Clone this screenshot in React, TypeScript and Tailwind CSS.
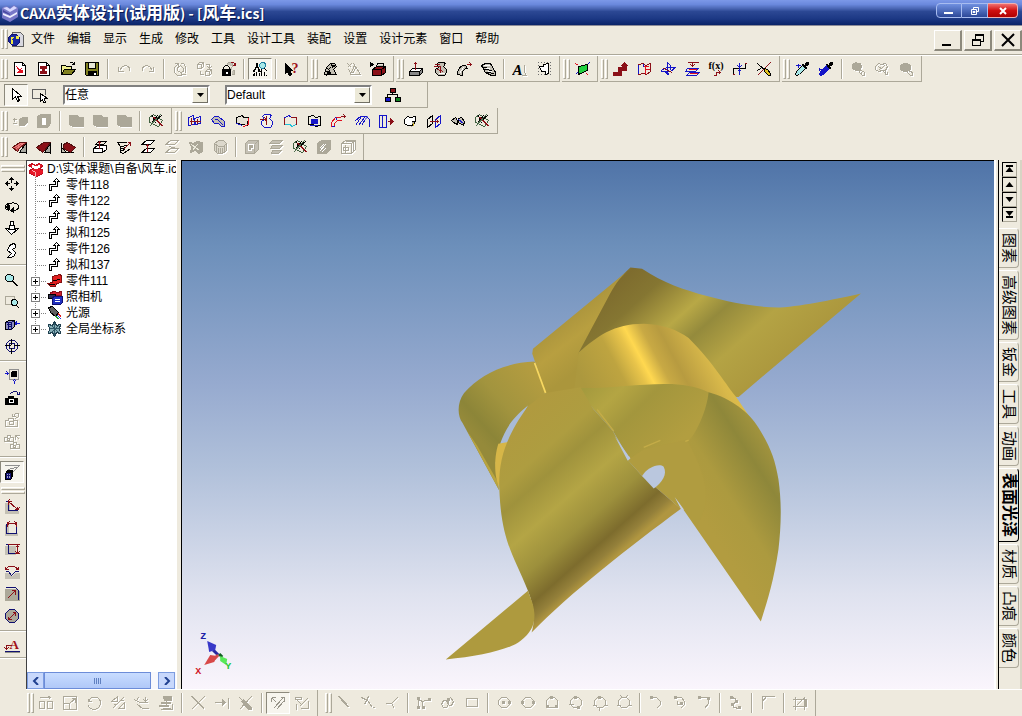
const K = '#000000';
const W = '#ffffff';
const R = '#8b1018';
const E = '#e01020';
const B = '#1515c8';
const N = '#101070';
const G = '#aca899';
const Y = '#808020';
const C = '#a8e8e8';
const S = '#c4c0b4';

// each entry is one path: [d, stroke, fill]
type Shape = [string, string?, string?];

const icons: Record<string, Shape[]> = {
  newRed: [['M2 1h8l3 3v10h-11z', K, W], ['M10 1v3h3', K], ['M4 5l3 4M9 7l-4 4h5v-3M5 6l4 4', E], ['M6 8h4v3h-3z', '', E]],
  newSheet: [['M2 1h8l3 3v10h-11z', K, W], ['M10 1v3h3', K], ['M4 5h6v2h-2v3h2v2h-6v-2h2v-3h-2z', R, R]],
  open: [['M1 13v-9h4l1 1h5v3', K, '#f0f090'], ['M1 13l3 -5h11l-4 5z', K, Y], ['M9 2c2 -2 4 -1 5 1M14 0v3h-3', K]],
  save: [['M1 1h13v13h-12l-1 -1z', K, Y], ['M4 1h7v6h-7z', K, '#e8e8d8'], ['M4 10h8v4h-8z', K, K], ['M9 11h2v2h-2z', '', W]],
  undo: [['M2 5v5h5M3 9l3 -4c4 -2 8 0 7 5', G]],
  redo: [['M13 5v5h-5M12 9l-3 -4c-4 -2 -8 0 -7 5', G]],
  cycle: [['M2 2h4v4M6 2l-4 4v5l3 3h4M8 2h3l2 3v6M13 13h-4v-3M5 6l3 -2 3 3v3l-3 1 -3 -2z', G]],
  cubes: [['M1 3l2 -2h4v4l-2 2h-4zM1 3h4v4M5 3l2 -2M9 10l2 -2h4v4l-2 2h-4zM9 10h4v4M13 10l2 -2M9 3h4v3M11 5l2 2 2 -2M4 9v4h3', G]],
  lock: [['M6 3l2 -2h4v4M12 5l-2 2v5M12 9h2v4h-3', G, S], ['M10 1h3l2 3M15 1v3h-3', R], ['M2 8h8v6h-8z', K, K], ['M3 8v-2l2 -2h2l2 2v2', K], ['M5 10h2v2h-2z', '', W]],
  treeFind: [['M4 2h1v2h-1zM4 5l-2 4M5 5l2 4M1 9h1v1h-1zM1 13h1v1h-1zM6 9h1v1h-1zM2 11v2M7 11v3M4 10v4M9 9v5M12 10v4M14 13v1M9 8l-1 3', K], ['M9 1h3l1 2v2l-2 2h-2l-2 -2v-2z', '#2080a0', C], ['M12 7l3 3', K]],
  help: [['M1 2v10l2 -2 2 4 2 -1 -2 -4h3z', K, K]],
  robot: [['M2 12l2 -6 4 -4h4l2 3 -3 3 3 5h-5l-2 -3 -3 4z', K, S], ['M4 6l4 4M8 2l3 5M1 13h13M5 9l3 -3M2 10h3', K], ['M5 10h2v2h-2zM10 4h2v1h-2z', K, K]],
  robotOff: [['M1 2l4 4M5 2l-4 4M7 2l7 11h-10l4 -9M5 13l-3 -5M9 7l-3 5', G]],
  toolbox: [['M2 8l4 -3h9v6l-4 3h-9z', K, R], ['M2 8h9v6M11 8l4 -3M6 5l1 -3h6v3', K], ['M0 1l3 2 -3 2z', K, K], ['M7 3h5v1h-5z', '', S]],
  extrude: [['M1 10l3 -3h10l-3 3z', K, W], ['M1 10h10v4h-10zM11 10l3 -3v4l-3 3', K, '#888888'], ['M7 8v-7M5 3l2 -2 2 2M6 2h2', R]],
  spin: [['M4 3l2 -2h5l2 1 -2 3 3 3v3l-2 3h-6l-3 -3v-3l3 -2z', K, S], ['M1 5h7M2 3h5M5 8l6 2M8 4v8', R], ['M6 12h6', W]],
  sweep: [['M1 13c0 -5 2 -9 8 -9l2 3c-4 0 -6 3 -5 7z', K, S], ['M3 12l4 -6', W], ['M10 3h5M13 1l2 2 -2 2', R]],
  loft: [['M1 4l4 -2h5l5 9v3h-4l-6 -3z', K, S], ['M2 6l8 1M4 8l8 1M6 11l8 1', K], ['M3 4h6M5 7h4M7 10h4', W]],
  text: [['M12 3v8l2 3h-5', G]],
  emboss: [['M1 1h1M4 1h1M7 1h1M10 1h1M13 1h1M1 4h1M13 4h1M1 7h1M13 7h1M1 10h1M13 10h1M1 13h1M4 13h1M7 13h1M10 13h1M13 13h1', '#707070'], ['M3 5l4 0v-2l5 -1v10l-3 1v-3l-4 0z', K, W]],
  plane: [['M1 2l3 2M12 12l2 2', E], ['M1 13l3 -3M11 5l4 -4', B], ['M4 5l9 -2v6l-9 4z', K, '#20d040']],
  curveUp: [['M2 12h5v-5h5v-5', R], ['M1 11h5v-5h4v-2h-1l3 -3 3 3h-1v5h-5v5h-8z', R, R]],
  surfRed: [['M2 3l5 -1 2 2 5 -2v8l-4 3 -3 -1 -5 1z', R], ['M9 4v8M6 5h6M8 8h5', E], ['M2 3v9M7 2v3', B]],
  plane3: [['M1 9l5 -3h9l-5 4h-9z', B], ['M7 1v12M7 1l3 3v4M5 11l4 2', B], ['M3 7l9 4', R]],
  planes: [['M3 7h11l-3 3h-10zM5 11h10l-3 3h-10z', B], ['M4 8h8M5 12h8', E], ['M3 1h11M8 1v4M6 3l2 2 2 -2', R]],
  fx: [['M5 14h3v-3h4M10 9l2 2 -2 2', R]],
  project: [['M1 13v-6h12v-5M1 7v6', K], ['M7 1v12M5 4l2 2 2 -2M5 10l2 -2 2 2', B], ['M12 2h2M0 13h2', R]],
  cutCurve: [['M1 2l12 11M1 9l6 -4', K], ['M14 1l-13 13', R], ['M8 7l3 1 3 4v2h-2l-4 -4z', K, '#e0c020']],
  dropper: [['M1 13l1 -3 6 -6 3 3 -6 6 -3 1z', K, C], ['M8 3l2 1 2 -3h2v2l-3 2 1 2h-1z', K, K], ['M1 4h5M4 2v4', B]],
  dropperFull: [['M1 13l1 -3 6 -6 3 3 -6 6 -3 1z', B, B], ['M8 3l2 1 2 -3h2v2l-3 2 1 2h-1z', K, K], ['M0 8h4M1 6v3', B]],
  blob1: [['M2 3l3 -2 2 1 3 0 1 4 -2 3 -4 0 -3 -2z', G, G], ['M9 8l5 3v3h-2l-3 -3zM11 10v3', G]],
  blob2: [['M1 5l3 -3 3 1 4 -1 2 3 -2 4 -3 0 -4 1 -3 -2zM4 5l3 2 3 -3M5 8l3 -2M9 10l4 4M11 9v4h2v-3', G]],
  blob3: [['M2 4l3 -2h4l3 2v4l-3 2h-4l-3 -2z', G, G], ['M10 9l4 2v3h-2l-3 -3', G]],

  arrow: [['M4 1v11l3 -3 2 5 2 -1 -2 -4h4z', K, W]],
  boxPick: [['M8 11h-8v-9h13v5', '#606060'], ['M8 6v8l2 -2 1 3 2 0 -1 -4h3z', K, W]],
  network: [['M5 1h5v4h-5z', K, R], ['M0 10h5v4h-5z', K, B], ['M10 10h5v4h-5z', K, '#108020'], ['M7 5v2M2 9v-2h10v2', K]],

  plusMinus: [['M0 6h4M2 4v4M0 10h4', G], ['M7 6l3 -2h5v5l-3 3h-5z', G, G]],
  cubeHole: [['M1 3l3 -2h10v9l-3 4h-10z', G, G], ['M6 5h3v6h-3z', W, W]],
  solidOff: [['M1 2h8l2 2h4v9h-11l-3 -2z', G, G]],
  wrench: [['M1 4l4 -3 9 6 -4 6 -9 -4z', '#406040'], ['M4 2l3 8M9 2l-6 8M14 1l-9 8', K], ['M5 4l9 9M6 4l9 9', R], ['M12 1l-11 12', '#507050']],
  surf1: [['M2 4l5 -2 1 9 -6 1zM8 5l6 -2v7l-5 1z', B], ['M3 8h11M5 4v7M11 5v5', R]],
  surf2: [['M1 6l3 -3h4l6 5v5h-3l-3 -3h-4z', B, S], ['M4 6h3l6 6M8 3l4 4', B]],
  surf3: [['M2 4l6 -2 1 2h5l-1 8 -5 -1 -6 -1z', K, '#e4e0d4'], ['M14 4v7l-5 2', E], ['M2 10l6 2', B]],
  surf4: [['M4 3l2 -2h5l2 1 -2 3 3 3v3l-2 3h-6l-3 -3v-3l3 -2z', B, '#f4f0e4'], ['M1 6h7M6 4l2 2 -2 2M8 2v9', R]],
  surf5: [['M2 4l5 -2 1 2', B], ['M8 4h6v7', R], ['M2 4v7', R], ['M2 11h6l1 2 5 -2', '#20c0d8']],
  surf6: [['M2 3l5 -1 2 2 5 -1v9l-5 1 -2 -2h-5z', K], ['M5 6h6v4h-6z', B, B], ['M3 12h8', B]],
  surf7: [['M1 13v-4l4 -5h5M4 13v-3l3 -3h4', E], ['M1 13h3M5 4l2 3', B], ['M10 3h5M13 1l2 2 -2 2', R]],
  surf8: [['M1 7l5 -4h6l3 3v7M1 12l6 -9M4 12l6 -8M7 12l5 -8', B], ['M13 3l-3 4', '#8080e0']],
  surf9: [['M1 2h7v12h-7zM4 2v12', B], ['M9 8h5M12 5l3 3 -3 3zM12 6v4', R, R]],
  surf10: [['M2 6l3 -3 3 1 5 -1v5l-3 4h-5l-3 -2z', K, W], ['M9 8h4l-4 5', K, G], ['M11 9v3', '#d0b020']],
  surf11: [['M1 6l5 -4v8l-5 4z', K], ['M9 6l5 -4v8l-5 4z', B], ['M3 8h9M10 6l2 2 -2 2', R]],
  surf12: [['M1 7l4 -3 2 3v4l-4 -2zM8 5l3 -1 3 4 -1 4 -5 -3z', K, S], ['M8 6l5 4', B]],

  fillet1: [['M7 13h7v-10z', K, '#a8a8a0'], ['M0 8l7 -5h7l-7 6 -2 3z', '#601010', '#c05050'], ['M2 8l8 -5M4 9l8 -6', '#f08080'], ['M14 3v11', K]],
  fillet2: [['M8 13h6v-9z', K, '#a8a8a0'], ['M0 8l7 -5h7l-6 8 -2 2z', '#501010', R], ['M14 4v10', K]],
  fillet3: [['M1 3v10h12', K], ['M1 13v-5l5 5z', K, S], ['M3 5l4 -2 8 5 -5 5 -7 -4z', '#501010', R]],
  face1: [['M1 9l4 -3h9v4l-4 3h-9zM1 9h9v4', K, W], ['M3 5l3 -3h8l-3 3z', K], ['M7 9v-7M5 4l2 -2 2 2', R]],
  face2: [['M1 3h9M1 3l3 4v6l3 1 7 -5M4 7l7 -1M5 9l5 -1M5 11l4 -1', K], ['M7 10l7 -7M11 3h3v3', R]],
  face3: [['M1 5l5 -4h8l-4 4zM1 13l5 -4h8l-4 4z', K, W], ['M7 12v-7M5 7l2 -2 2 2', R]],
  face4: [['M1 5l5 -4h8l-4 4zM1 13l5 -4h8l-4 4zM5 7l7 2', G]],
  face5: [['M1 3l4 1 4 -2 5 1v9l-4 2 -3 -3 -5 2 1 -5z', G, G], ['M3 5l8 6M9 5l-5 6', '#eceadc']],
  face6: [['M2 4l4 -3h5l3 3v7l-4 3h-5l-3 -3z', G, '#dcd8cc'], ['M2 4l4 3h5l3 -3M4 6v6M6 8v6M8 8v6M10 8v6M12 6v6', G]],
  shell1: [['M1 4l3 -3h10v9l-4 4h-9z', G, S], ['M4 5h5v4h-2v2h-3z', W, G], ['M10 5v9M10 5l4 -4', G]],
  shell2: [['M4 1h10l-3 3h-10zM4 6h10l-3 3h-9zM4 11h9l-3 3h-7z', G, S]],
  shell4: [['M1 4l4 -3h9v9l-4 4h-9z', G, G], ['M3 12l6 -7M3 9l4 -4M5 13l4 -4', W]],
  shell5: [['M1 4l4 -3h10v9l-4 4h-10zM1 4h10v10M11 4l4 -3M5 2l9 0M3 8h5v3h-5zM5 5v9M13 3v9', G]],

  move: [['M7 1l2 2h-4zM7 14l2 -2h-4zM1 7l2 -2v4zM14 7l-2 -2v4z', K, K], ['M7 2v4M7 9v4M2 7h3M9 7h4', K]],
  rotate: [['M5 12c-5 -1 -6 -5 -1 -7c4 -1 10 -1 10 3c0 3 -3 4 -6 4', K], ['M5 11c-4 -1 -4 -4 0 -5M9 9v5l-3 -2z', K, K]],
  zoomPan: [['M6 1h3v4h-3zM5 5h5v3h4l-7 6 -6 -6h4z', K, W], ['M3 9h8', K]],
  look: [['M5 3l4 -2 2 1v3l-3 2 3 3 -1 3 -3 2h-4l4 -4 -4 -3z', K, W]],
  zoom: [['M3 2h3l3 2v3l-2 2h-4l-2 -2v-3z', K, C], ['M9 9l5 5M8 9l5 5', K]],
  zoomBox: [['M1 2h9v8h-9z', G], ['M8 5h3l2 2v2l-2 2h-3l-1 -2v-2z', K, C], ['M12 11l3 3', K]],
  cubeLook: [['M1 6l3 -2h6v6l-3 3h-6z', K, '#9090c0'], ['M1 6h6v7M7 6l3 -2M2 8h5M3 10h4M4 6v7', N], ['M11 7h4M12 5l-1 2 1 2', B]],
  target: [['M5 2h5l3 3v5l-3 3h-5l-3 -3v-5zM5 5h5v5h-5z', N], ['M7 0v6M7 9v6M0 7h6M9 7h6', K]],
  perspBox: [['M5 1h9v10h-9z', '#909090'], ['M7 4l2 -1h3v5h-5z', K, K], ['M0 5h4M2 3l2 2 -2 2M10 15v-3M8 13l2 -2 2 2', B]],
  camera: [['M1 8h3v-2h5v2h4v6h-12z', K, K], ['M5 9h4v3h-4z', W, K], ['M6 3l3 -2h3l2 3M15 1v3h-3', N]],
  cameraOff: [['M1 8h3v-2h5v2h4v6h-12zM5 9h4v3h-4zM9 4l2 -3h3v3l-3 2M8 1v3h3', G]],
  cameras: [['M0 3h3v-2h3v2h3v4h-9zM3 4h2v2h-2zM6 10h3v-2h3v2h3v4h-9zM9 11h2v2h-2zM11 1h4M11 1v4M11 1l4 4', G]],
  persp: [['M0 1h15M15 1l-8 8M15 2l-11 3', '#909090'], ['M1 9l2 -3h5v6l-2 3h-5z', K, K], ['M2 9h4v5h-4z', N, '#a0a0c8'], ['M2 11h4M4 9v5', N]],
  dim1: [['M0 4h5v8h9v3h-14z', '', S], ['M1 3h3v9h9', N], ['M4 3l9 8M4 3h3M4 3v3M13 11h-3M13 11v-3M5 1l-2 3M15 9l-2 3', R]],
  dim2: [['M0 4h4v8h9v3h-13z', '', S], ['M2 3v10h10v-10', N], ['M3 1v5M12 1v5M3 3h9M5 1l-2 2 2 2M10 1l2 2 -2 2', R]],
  dim3: [['M0 3h11v9h-11z', '', S], ['M1 2h3v9h9', N], ['M3 2h12M10 11h5M13 3v8M11 5l2 -2 2 2M11 9l2 2 2 -2', R]],
  dim4: [['M0 8h4l3 4 4 -4h4v6h-15z', '', S], ['M1 7h3l3 4 4 -4h3', N], ['M1 5l3 -3h6l4 3M1 2v3h3M14 2v3h-3', R]],
  dim5: [['M0 2h12l3 3v9h-15z', '', G], ['M1 1h10l3 3v9', N], ['M3 12l8 -8M7 4h4v4', R]],
  dim6: [['M5 1h5l4 4v5l-4 4h-5l-4 -4v-5z', N, G], ['M4 11l7 -7M8 4h3v3M4 8v3h3', R]],
  note: [['M2 11v-4h5M0 9l2 2 2 -2', R], ['M0 13h15', N], ['M0 14h15', '#909088']],

  bRects: [['M1 6h5v7h-5zM9 6h5v7h-5zM1 2h11M10 1l2 1 -2 2', G]],
  bScale: [['M1 1h13v13h-13zM1 8h6v6M8 7l5 -4M9 3h4v4', G]],
  bRot: [['M2 3v3h3M2 6c2 -6 12 -6 12 2c-1 8 -12 7 -12 1', G]],
  bMirror: [['M1 6h6v-5zM8 13l6 0v-6zM2 13l11 -11M3 9h3M9 5h4', G]],
  bOffset: [['M0 4l5 3h8M3 9l5 4h6M11 1v5M9 4l2 2 2 -2M4 2l-2 3', G]],
  bStamp: [['M5 1h8v4h-7zM3 7h9v1h-9zM1 10h9v1h-9z', G, G], ['M2 14h12v-6M8 5v4M4 13h8', G]],
  bX: [['M1 1l13 13M14 1l-13 13M2 1l12 12', G]],
  bExt: [['M0 7h10M8 4l3 3 -3 3zM14 2v11', G, G]],
  bCut: [['M1 2l11 11M13 1l-12 13M5 4l8 8v2h-3l-7 -8', G, G]],
  bPen: [['M1 2h4M1 2v4M2 3l4 4M12 3l-9 10M14 5l-8 9M10 2h4v4', '#98958a']],
  bPen2: [['M1 2h6v2h-6zM3 5l5 5M13 3l-8 8M2 8v6M6 13h8M14 5v8', G]],
  line: [['M2 1l10 11M3 1l10 11', G]],
  tan: [['M1 2l6 3 5 7M8 1l-4 8M12 12h2', G]],
  norm: [['M1 8h6l6 -6M7 8l3 5', G]],
  poly: [['M2 3v9M2 4l4 2 7 -2M6 6v6', G], ['M1 2h2v2h-2zM1 11h2v2h-2zM6 11h2v2h-2zM12 3h2v2h-2z', G, G]],
  poly2: [['M1 9l2 -4h3l2 4 -2 3h-3zM8 8l-1 -4 3 -2 3 4 -2 4h-3', G], ['M7 3h2v2h-2z', G, G]],
  rect: [['M2 3h11v8h-11z', G]],
  circ: [['M5 2h5l3 3v4l-3 3h-5l-3 -3v-4z', G], ['M6 6h2v2h-2zM12 6h2v2h-2z', G, G]],
  circ2: [['M5 2h5l3 3v4l-3 3h-5l-3 -3v-4z', G], ['M1 6h2v2h-2zM12 6h2v2h-2z', G, G]],
  circ3: [['M5 2h5l3 3v4l-3 3h-5l-3 -3v-4z', G], ['M6 1h2v2h-2zM2 10h2v2h-2zM11 10h2v2h-2z', G, G]],
  circ4: [['M5 2h5l3 3v4l-3 3h-5l-3 -3v-4zM0 9h5', G], ['M6 1h2v2h-2zM9 11h2v2h-2z', G, G]],
  circ5: [['M5 2h5l3 3v4l-3 3h-5l-3 -3v-4zM0 10h4M11 10h4M7 12v3', G], ['M6 1h2v2h-2z', G, G]],
  circ6: [['M5 2h5l3 3v4l-3 3h-5l-3 -3v-4zM0 10h4M11 10h4M4 0l2 2M11 0l-2 2', G]],
  arc1: [['M3 2h5l4 4v3l-4 4', G], ['M2 1h2v2h-2z', G, G]],
  arc2: [['M4 2h5l3 4v3l-4 4M5 5v4h5', G], ['M2 1h2v2h-2zM8 7h2v2h-2z', G, G]],
  arc3: [['M3 2h9v6l-4 5', G], ['M2 1h2v2h-2zM11 2h2v2h-2z', G, G]],
  spline: [['M3 2l4 1 1 3 -4 3 1 3 6 1', G], ['M2 1h2v2h-2zM7 5h2v2h-2zM3 8h2v2h-2zM10 11h2v2h-2z', G, G]],
  corner: [['M2 13v-12h12M2 6l4 -5', G]],
  trimBox: [['M0 4h14M0 11h14M3 1v13M12 1v13M4 10l8 -8', G], ['M12 5h2v6h-2z', G, G]],

  app: [['M4 1h8l3 3v11h-11z', '#606060', '#d8d8e0'], ['M3 3h5l3 3v5l-3 3h-4l-4 -4v-4z', N, '#1828a0'], ['M2 5h4l-2 3v4h-2zM7 4h3v3h-2z', '', '#f0e840']],
  curveNode: [['M2 13v-6h6v-3h-2l3 -3 3 3h-2v5h-6v4z', K, W]],
  root: [['M1 4l4 -2 3 2 3 -2 5 2 -4 3 4 2v3l-7 3 -7 -3v-3l4 -2z', '#c01020', '#e81828'], ['M4 3l4 2 4 -2v3l-4 2 -4 -2z', '', W], ['M5 9l3 2v4', '#f8b0b0']],
  part: [['M5 3l7 -2 2 1v7l-5 1 -1 3h-5l-3 -3 5 -1z', '#801010', '#e02020'], ['M6 7l7 -1M1 11h6', K]],
  cam: [['M3 3l4 -1 3 1 4 -1v4h-11z', R, '#d02030'], ['M1 5h7v4h-7z', K, '#303050'], ['M5 8l2 -1h8v6l-2 2h-8z', N, '#2030c0'], ['M7 10h5M7 12h5', W]],
  light: [['M1 2l4 -1 6 6 -3 4 -5 -4z', K, '#606060'], ['M8 11l3 3M9 11l3 3', '#20a030'], ['M11 8l3 3M11 9l3 3', '#e02020'], ['M10 10l4 4', '#2040e0']],
  coord: [['M7 0l2 4 4 -1 -1 4 1 5 -4 -1 -2 4 -2 -4 -4 1 1 -5 -1 -4 4 1z', '#204050', '#88b0b8'], ['M7 1v13M2 7h11M4 4l7 7M11 4l-7 7', '#305868']],
};

// icons that carry a letter on top of the drawing
const letters: Record<string, { t: string; x: number; y: number; size: number; fill: string; italic?: boolean }> = {
  help: { t: '?', x: 7, y: 11, size: 14, fill: '#a01018' },
  text: { t: 'A', x: 0, y: 13, size: 15, fill: K, italic: true },
  fx: { t: 'f(x)', x: 0, y: 7, size: 10, fill: K },
  note: { t: 'A', x: 5, y: 10, size: 13, fill: '#a01018' },
};

const Icon = ({ name }: { name: string }) => {
  const letter = letters[name];
  return (
    <svg viewBox="-0.5 -0.5 16 16" className="h-4 w-4 shrink-0" shapeRendering="crispEdges" aria-hidden="true">
      {icons[name].every((s) => s[1] === G) &&
        icons[name].map((s, i) => (
          <path key={i} d={s[0]} stroke={W} fill={s[2] ? W : 'none'} transform="translate(1 1)" />
        ))}
      {icons[name].map((s, i) => (
        <path key={i} d={s[0]} stroke={s[1] || 'none'} fill={s[2] || 'none'} />
      ))}
      {letter && (
        <text
          x={letter.x}
          y={letter.y}
          fill={letter.fill}
          fontSize={letter.size}
          fontWeight="bold"
          fontStyle={letter.italic ? 'italic' : 'normal'}
          fontFamily="Liberation Serif, serif"
        >
          {letter.t}
        </text>
      )}
    </svg>
  );
};

const PRESSED = 'border border-[#8c897c] border-r-white border-b-white bg-[#f7f5ee]';

// "|" is a separator, "*" in front of a name is a pressed button
const Items = ({ list, vertical }: { list: string; vertical?: boolean }) => (
  <>
    {list.split(' ').map((raw, i) => {
      if (raw === '|') {
        return vertical ? (
          <div key={i} className="flex h-2 w-full flex-col justify-center">
            <div className="h-[2px] border-t border-[#aca899] bg-white" />
          </div>
        ) : (
          <div key={i} className="flex h-5 w-2 justify-center">
            <div className="w-[2px] border-l border-[#aca899] bg-white" />
          </div>
        );
      }
      const on = raw.startsWith('*');
      const name = on ? raw.slice(1) : raw;
      return (
        <button
          key={i}
          type="button"
          aria-label={name}
          className={`flex h-[22px] w-6 shrink-0 items-center justify-center ${on ? PRESSED : ''}`}
        >
          <Icon name={name} />
        </button>
      );
    })}
  </>
);

const Grip = () => (
  <div className="flex h-5 w-2 shrink-0 gap-px pl-px">
    <div className="w-[3px] border border-white border-r-[#aca899] border-b-[#aca899]" />
    <div className="w-[3px] border border-white border-r-[#aca899] border-b-[#aca899]" />
  </div>
);

const GripFlat = () => (
  <div className="flex h-3 w-full shrink-0 flex-col gap-px px-px pt-1">
    <div className="h-[3px] border border-white border-r-[#aca899] border-b-[#aca899]" />
    <div className="h-[3px] border border-white border-r-[#aca899] border-b-[#aca899]" />
  </div>
);

const Group = ({ list, bottom = true }: { list: string; bottom?: boolean }) => (
  <div className={`flex h-[26px] shrink-0 items-center border-r border-[#aca899] pr-[3px] ${bottom ? 'border-b' : ''}`}>
    <Grip />
    <Items list={list} />
  </div>
);

const Combo = ({ label, value }: { label: string; value: string }) => (
  <div className="relative h-5 w-[147px] shrink-0">
    <select
      aria-label={label}
      className="block h-5 w-full appearance-none border-2 border-white border-t-[#808080] border-l-[#808080] bg-white text-[12px] leading-4 outline-none"
    >
      <option>{value}</option>
    </select>
    <span className="pointer-events-none absolute top-[2px] right-[2px] flex h-4 w-4 items-center justify-center border border-white border-r-[#716f64] border-b-[#716f64] bg-[#ece9d8]">
      <svg viewBox="0 0 7 4" className="h-1 w-[7px]"><path d="M0 0h7l-3.500 4z" /></svg>
    </span>
  </div>
);

const menus = ['文件', '编辑', '显示', '生成', '修改', '工具', '设计工具', '装配', '设置', '设计元素', '窗口', '帮助'];

const nodes = [
  { icon: 'curveNode', text: '零件118' },
  { icon: 'curveNode', text: '零件122' },
  { icon: 'curveNode', text: '零件124' },
  { icon: 'curveNode', text: '拟和125' },
  { icon: 'curveNode', text: '零件126' },
  { icon: 'curveNode', text: '拟和137' },
  { icon: 'part', text: '零件111', more: true },
  { icon: 'cam', text: '照相机', more: true },
  { icon: 'light', text: '光源', more: true },
  { icon: 'coord', text: '全局坐标系', more: true },
];

const tabs = ['图素', '高级图素', '钣金', '工具', '动画', '表面光泽', '材质', '凸痕', '颜色'];
const activeTab = '表面光泽';

const TitleBar = () => (
  <header className="flex h-[26px] shrink-0 items-center border-b border-[#8c8c98] bg-[linear-gradient(180deg,#7c98e8_0%,#6a88dc_18%,#4a66b4_34%,#2c4894_46%,#1c3884_75%,#0a2468_100%)] pr-1 pl-[2px]">
    <svg viewBox="0 0 16 18" className="h-[18px] w-4" aria-hidden="true">
      <path d="M0 4l4 -2 4 2 4 -3 4 3v9l-8 5 -8 -4z" fill="#7878c8" />
      <path d="M1 4l4 -1 3 2 4 -3 3 2 -7 4z" fill="#d8d8ff" />
      <path d="M1 9l7 3 7 -4v2l-7 4 -7 -3z" fill="#f0f0ff" />
      <path d="M1 6l7 4v1l-7 -3z" fill="#4848a0" />
    </svg>
    <h1 className="flex items-baseline pl-[2px] font-['Noto_Sans_CJK_SC',sans-serif] text-[14px] leading-6 font-bold whitespace-pre text-white [text-shadow:1px_1px_0_#0a1850]">
      CAXA<span className="text-[17px]">实体设计</span>(<span className="text-[17px]">试用版</span>) - [<span className="text-[17px]">风车</span>.ics]
    </h1>
    <div className="ml-auto flex self-start pt-[3px]">
      <button type="button" aria-label="最小化" className="flex h-[15px] w-[26px] items-center justify-center rounded-l-sm border border-[#a8bcf0] bg-[linear-gradient(#7090e0,#2c4898)]">
        <svg viewBox="0 0 10 8" className="h-2 w-[10px]"><path d="M0 5h9v2h-9z" fill="#fff" /></svg>
      </button>
      <button type="button" aria-label="还原" className="flex h-[15px] w-[26px] items-center justify-center border border-l-0 border-[#a8bcf0] bg-[linear-gradient(#7090e0,#2c4898)]">
        <svg viewBox="0 0 8 8" className="h-2 w-2"><path d="M2.500 2v-1.500h5v4h-1.500M.5 2.500h5v5h-5zM2 4.500h2v1h-2z" fill="none" stroke="#fff" /></svg>
      </button>
      <button type="button" aria-label="关闭" className="flex h-[15px] w-[30px] items-center justify-center rounded-r-sm border border-l-0 border-[#f0b0b0] bg-[linear-gradient(#f07070,#d01010_50%,#b00000)]">
        <svg viewBox="0 0 8 8" className="h-2 w-2"><path d="M1 1l6 6M7 1l-6 6" stroke="#fff" strokeWidth="2" /></svg>
      </button>
    </div>
  </header>
);

const MDI = 'flex h-[21px] w-7 items-center justify-center border border-white border-r-2 border-b-2 border-r-[#8c897c] border-b-[#8c897c]';

const MenuBar = () => (
  <nav className="flex h-[29px] shrink-0 items-center border-b border-[#aca899] pb-[3px]">
    <Grip />
    <Icon name="app" />
    <div className="flex pl-px">
      {menus.map((m) => (
        <button key={m} type="button" className="px-[6px] text-[12px] leading-5 whitespace-nowrap">{m}</button>
      ))}
    </div>
    <div className="ml-auto flex gap-[2px] pt-1">
      <button type="button" aria-label="最小化子窗口" className={MDI}>
        <svg viewBox="0 0 14 14" className="h-[14px] w-[14px]"><path d="M1 11h9v2h-9z" /></svg>
      </button>
      <button type="button" aria-label="还原子窗口" className={MDI}>
        <svg viewBox="0 0 14 14" className="h-[14px] w-[14px]" shapeRendering="crispEdges"><path d="M4.500 6v-4h8v6h-3M1.500 7h8v5h-8z" fill="none" stroke="#000" /><path d="M4 1h9v2h-9zM1 6h9v2h-9z" /></svg>
      </button>
      <button type="button" aria-label="关闭子窗口" className={MDI}>
        <svg viewBox="0 0 14 14" className="h-[14px] w-[14px]"><path d="M1 1l12 12M13 1l-12 12" stroke="#000" strokeWidth="2" /></svg>
      </button>
    </div>
  </nav>
);

const Tree = () => (
  <aside className="flex w-[150px] shrink-0 flex-col overflow-hidden border-t border-l border-[#404040] bg-white text-[12px] leading-4">
    <div className="flex whitespace-nowrap">
      <Icon name="root" />
      <span className="pl-1">D:\实体课题\自备\风车.ics</span>
    </div>
    <ul className="flex-1">
      {nodes.map((n, i) => (
        <li key={n.text} className="flex h-4 items-center whitespace-nowrap">
          <span className="flex w-5 shrink-0 self-stretch">
            <svg viewBox="0 0 20 16" className="h-4 w-5" shapeRendering="crispEdges" aria-hidden="true">
              <path d={i === nodes.length - 1 ? 'M8.500 0v8' : 'M8.500 0v16'} stroke="#808080" strokeDasharray="1 1" />
              <path d="M10 8.500h9" stroke="#808080" strokeDasharray="1 1" />
              {n.more && <path d="M4.500 4.500h8v8h-8z" stroke="#808080" fill="#fff" />}
              {n.more && <path d="M6 8.500h5M8.500 6v5" stroke="#000" />}
            </svg>
          </span>
          <Icon name={n.icon} />
          <span className="pl-[3px]">{n.text}</span>
        </li>
      ))}
    </ul>
    <div className="flex h-[17px] bg-[#f8f8fc] pr-px">
      <button type="button" aria-label="向左滚动" className="flex w-[17px] items-center justify-center border border-[#7c9ce0] bg-[#c8d8fc]">
        <svg viewBox="0 0 8 8" className="h-2 w-2"><path d="M6 0l-4 4l4 4" fill="none" stroke="#204090" strokeWidth="2" /></svg>
      </button>
      <div className="flex w-[107px] items-center justify-center gap-px border border-[#6c8cd8] bg-[linear-gradient(#c8dcff,#b0c8f8)]">
        {[0, 1, 2, 3].map((i) => <span key={i} className="h-[6px] w-px bg-[#6080c0]" />)}
      </div>
      <button type="button" aria-label="向右滚动" className="ml-auto flex w-[17px] items-center justify-center border border-[#7c9ce0] bg-[#c8d8fc]">
        <svg viewBox="0 0 8 8" className="h-2 w-2"><path d="M2 0l4 4l-4 4" fill="none" stroke="#204090" strokeWidth="2" /></svg>
      </button>
    </div>
  </aside>
);

const Pinwheel = () => (
  <svg viewBox="182 161 811 529" preserveAspectRatio="xMidYMid meet" className="h-full w-full" role="img" aria-label="风车">
    <defs>
      <linearGradient id="back" gradientUnits="userSpaceOnUse" x1="480" y1="60" x2="870" y2="500">
        <stop offset="0" stopColor="#94803a" />
        <stop offset=".14" stopColor="#7e6c2e" />
        <stop offset=".28" stopColor="#857632" />
        <stop offset=".48" stopColor="#b8a846" />
        <stop offset=".6" stopColor="#948a3c" />
        <stop offset=".78" stopColor="#b4a344" />
        <stop offset="1" stopColor="#ac983e" />
      </linearGradient>
      <linearGradient id="fold" gradientUnits="userSpaceOnUse" x1="380" y1="200" x2="480" y2="330">
        <stop offset="0" stopColor="#a8923c" />
        <stop offset=".5" stopColor="#b89f40" />
        <stop offset="1" stopColor="#ab963c" />
      </linearGradient>
      <linearGradient id="left" gradientUnits="userSpaceOnUse" x1="300" y1="360" x2="110" y2="530">
        <stop offset="0" stopColor="#b39c40" />
        <stop offset=".5" stopColor="#a2943e" />
        <stop offset=".85" stopColor="#8c8538" />
        <stop offset="1" stopColor="#958a3a" />
      </linearGradient>
      <linearGradient id="gold" gradientUnits="userSpaceOnUse" x1="460" y1="400" x2="850" y2="190">
        <stop offset="0" stopColor="#ac983e" />
        <stop offset=".25" stopColor="#bea440" />
        <stop offset=".37" stopColor="#e8c44a" />
        <stop offset=".42" stopColor="#ffd850" />
        <stop offset=".52" stopColor="#c8a944" />
        <stop offset=".62" stopColor="#b79b40" />
        <stop offset=".82" stopColor="#d8b84a" />
        <stop offset="1" stopColor="#e8c64c" />
      </linearGradient>
      <linearGradient id="right" gradientUnits="userSpaceOnUse" x1="760" y1="720" x2="1010" y2="560">
        <stop offset="0" stopColor="#b29c40" />
        <stop offset=".35" stopColor="#ac9a3f" />
        <stop offset=".75" stopColor="#8e873a" />
        <stop offset="1" stopColor="#a4953e" />
      </linearGradient>
      <linearGradient id="mid" gradientUnits="userSpaceOnUse" x1="480" y1="400" x2="700" y2="620">
        <stop offset="0" stopColor="#a49a3e" />
        <stop offset=".25" stopColor="#b4a543" />
        <stop offset=".5" stopColor="#a3963d" />
        <stop offset="1" stopColor="#b29e40" />
      </linearGradient>
      <linearGradient id="front" gradientUnits="userSpaceOnUse" x1="363" y1="412" x2="700" y2="795">
        <stop offset="0" stopColor="#b09a3f" />
        <stop offset=".25" stopColor="#ae9d40" />
        <stop offset=".37" stopColor="#9f923c" />
        <stop offset=".55" stopColor="#b4a545" />
        <stop offset=".73" stopColor="#9d903c" />
        <stop offset=".88" stopColor="#7d6c2d" />
        <stop offset=".95" stopColor="#94803a" />
        <stop offset="1" stopColor="#b09640" />
      </linearGradient>
    </defs>
    <g transform="translate(430 250) scale(.33333)">
      <path d="M600 53L635 57C700 100 760 120 830 139C900 158 980 174 1050 173C1120 169 1230 145 1293 131L925 442L600 430L440 400L440 308L530 120Z" fill="url(#back)" />
      <path d="M604 53L307 297L305 312L345 430L450 440L445 308L540 130C556 100 575 75 604 53Z" fill="url(#fold)" />
      <path d="M312 336C220 340 150 375 100 430C78 460 80 500 95 520L205 722L230 560L345 430Z" fill="url(#left)" />
      <path d="M110 546L205 722L203 700L140 590Z" fill="#b8a440" />
      <path d="M292 468C240 510 225 540 210 578L195 640L205 720L260 540Z" fill="#a9bbd6" />
      <path d="M203 583L237 577L215 640L207 714C192 690 188 630 203 583Z" fill="#d6b648" />
      <path d="M445 308C500 260 550 222 640 222C700 224 740 240 775 265C850 340 890 410 920 445L970 520L920 500L700 460L430 430Z" fill="url(#gold)" />
      <path d="M835 428C900 445 960 490 985 535C1020 590 1035 630 1045 690C1055 760 1053 830 1045 900C1030 1000 1010 1060 992 1117L733 743L752 778L635 680L592 632L700 500Z" fill="url(#right)" />
      <path d="M440 415C540 418 620 402 710 403C750 403 800 410 835 428C830 480 800 550 770 580L640 640L592 620L548 545L488 478Z" fill="url(#mid)" />
      <path d="M770 570C840 700 840 760 800 830L733 743L752 778L592 632L640 600Z" fill="#b09c40" />
      <path d="M450 413L345 430L292 470C220 570 200 640 207 740C215 880 250 920 292 1025C310 1070 315 1110 303 1150C420 1030 600 890 752 778L635 680L592 632L548 545L488 478Z" fill="url(#front)" />
      <path d="M292 1025L45 1231C150 1222 240 1200 270 1175C310 1145 320 1110 305 1060Z" fill="#ae9a3e" />
      <path d="M312 340L345 430" stroke="#f8d860" strokeWidth="5" />
      <path d="M500 480L550 545M640 594L690 573M765 576L775 572" stroke="#c4ac48" strokeWidth="4" fill="none" />
      <path d="M553 560L600 627L592 634Z" fill="#b9c6dd" />
      <path d="M635 680C650 655 685 640 700 652C712 675 695 700 670 717Z" fill="#bac7de" />
      <path d="M733 743L762 782L752 778Z" fill="#c5cee2" />
    </g>
    <g fontFamily="Liberation Mono, monospace" fontWeight="bold" fontSize="10">
      <path d="M217 656L212 651" stroke="#2828a0" strokeWidth="3" />
      <path d="M206 642l9 4 -1 5 -6 2z" fill="#3838c8" />
      <path d="M217 656L213 660" stroke="#d05050" strokeWidth="3" />
      <path d="M203 666l6 -10 7 1 -3 6z" fill="#d84848" />
      <path d="M218 655l3 3" stroke="#106020" strokeWidth="3" />
      <path d="M219 657l7 3 -1 6 -6 -4z" fill="#58e858" />
      <text x="199" y="640" fill="#2020a8">Z</text>
      <text x="194" y="675" fill="#d01828">X</text>
      <text x="224" y="670" fill="#28c838">Y</text>
    </g>
  </svg>
);

const navArrows = ['M3 2h7v2h-7zM6.500 4l4 5h-8z', 'M6.500 4l4 5h-8z', 'M2.500 4h8l-4 5z', 'M2.500 3h8l-4 5zM3 8h7v2h-7z'];

const Catalog = () => (
  <aside className="flex w-7 shrink-0 flex-col border-x-2 border-white border-r-[#d8d4c4] bg-[#eeeade]">
    <div className="ml-[2px] flex flex-1 flex-col border-l border-black">
      <div className="mb-[6px] ml-[3px] flex w-[15px] flex-col pt-[2px]">
        {navArrows.map((d) => (
          <button key={d} type="button" aria-label="翻页" className="h-[15px] border border-black border-r-[#aca899] border-b-[#aca899]">
            <svg viewBox="0 0 13 13" className="h-[13px] w-[13px]"><path d={d} /></svg>
          </button>
        ))}
      </div>
      <div role="tablist" className="flex flex-col gap-[2px]">
        {tabs.map((t) => (
          <button
            key={t}
            type="button"
            role="tab"
            aria-selected={t === activeTab}
            className={`flex w-5 shrink-0 items-center justify-center rounded-r-sm border border-l-0 border-t-white ${
              t === activeTab ? 'h-[74px] border-black text-[16px] font-bold' : 'border-[#aca899] text-[15px]'
            } ${t.length === 2 ? 'h-10' : t === activeTab ? '' : 'h-[70px]'}`}
          >
            <span className="leading-[18px] whitespace-nowrap [text-orientation:sideways] [writing-mode:vertical-rl]">{t}</span>
          </button>
        ))}
      </div>
    </div>
  </aside>
);

export default function App() {
  return (
    <div className="flex h-screen flex-col overflow-hidden bg-[#eeeade] font-['Liberation_Sans','Noto_Sans_CJK_SC',sans-serif] text-black">
      <TitleBar />
      <MenuBar />
      <div className="shrink-0">
        <div className="flex gap-[2px] border-t border-white">
          <Group list="newRed newSheet open save | undo redo | cycle cubes lock | *treeFind | help" />
          <Group list="robot robotOff toolbox" />
          <Group list="extrude spin sweep loft | text emboss" />
          <Group list="plane" />
          <Group list="curveUp surfRed plane3 planes fx project cutCurve" />
          <Group list="dropper dropperFull | blob1 blob2 blob3" />
        </div>
        <div className="flex">
          <div className="flex h-[26px] items-center border-r border-b border-[#aca899] pr-[22px] pl-1">
            <Items list="*arrow boxPick" />
            <div className="flex gap-[15px] pr-[9px] pl-[11px]">
              <Combo label="选择过滤" value="任意" />
              <Combo label="配置" value="Default" />
            </div>
            <Items list="network" />
          </div>
        </div>
        <div className="flex gap-[2px]">
          <Group list="plusMinus cubeHole | solidOff solidOff solidOff | wrench" />
          <Group list="surf1 surf2 surf3 surf4 surf5 surf6 surf7 surf8 surf9 surf10 surf11 surf12 wrench" />
        </div>
        <div className="flex">
          <Group bottom={false} list="fillet1 fillet2 fillet3 | face1 face2 face3 face4 face5 face6 | shell1 shell2 wrench shell4 shell5" />
        </div>
      </div>
      <main className="flex min-h-0 flex-1">
        <div className="flex w-[26px] shrink-0 flex-col items-start border-t border-[#aca899]">
          <GripFlat />
          <Items vertical list="move rotate zoomPan look | zoom zoomBox cubeLook target | perspBox camera cameraOff cameras | *persp" />
          <GripFlat />
          <Items vertical list="dim1 dim2 dim3 dim4 dim5 dim6 | note" />
          <div className="h-[2px] w-full border-t border-[#aca899] bg-white" />
        </div>
        <Tree />
        <div className="w-[5px] shrink-0 border-l border-white" />
        <section className="min-w-0 flex-1 border-t border-l border-black bg-[linear-gradient(180deg,#5074a8_0%,#6c8fba_16%,#96aacf_42%,#b0c0da_58%,#dfe2ef_82%,#faf5fc_100%)]">
          <Pinwheel />
        </section>
        <Catalog />
      </main>
      <footer className="ml-[26px] flex shrink-0 gap-[6px] border-t border-white">
        <Group bottom={false} list="bRects bScale bRot bMirror bOffset bStamp | bX bExt bCut | *bPen bPen2" />
        <Group bottom={false} list="line tan norm | poly poly2 rect | circ circ2 circ3 circ4 circ5 circ6 | arc1 arc2 arc3 | spline | corner | trimBox" />
      </footer>
    </div>
  );
}
